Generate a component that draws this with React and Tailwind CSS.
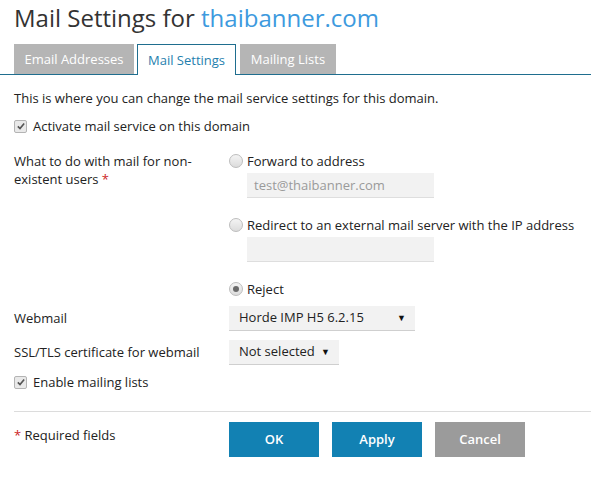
import React from "react";

function CheckBox() {
  return (
    <span className="inline-flex h-[13px] w-[13px] items-center justify-center rounded-[2px] border border-[#b4b4b4] bg-[#e9e9e9]">
      <svg viewBox="0 0 12 12" className="h-[10px] w-[10px]">
        <path d="M2.2 6.4 L4.8 9 L9.8 3" fill="none" stroke="#555" strokeWidth="2" />
      </svg>
    </span>
  );
}

function Radio({ checked }) {
  return (
    <span className="inline-flex h-[14px] w-[14px] items-center justify-center rounded-full border border-[#bdbdbd] bg-gradient-to-b from-[#f4f4f4] to-[#dcdcdc]">
      {checked && <span className="h-[6px] w-[6px] rounded-full bg-[#6a6a6a]" />}
    </span>
  );
}

function Select({ value, width }) {
  return (
    <div className={`flex h-[25px] items-center justify-between border-b border-[#cfcfcf] bg-[#f2f2f2] pl-[10px] pr-[9px] ${width}`}>
      <span>{value}</span>
      <span className="text-[9px] text-[#111]">▼</span>
    </div>
  );
}

export default function App() {
  return (
    <div className="min-h-[502px] w-[591px] overflow-hidden bg-white font-['Open_Sans',sans-serif] text-[13px] text-[#222]">
      <h1 className="pl-[14px] pt-[2px] text-[24px] leading-[32px] text-[#333]">
        Mail Settings for <span className="text-[#3d9ade]">thaibanner.com</span>
      </h1>

      <div className="mt-[10px] flex items-end border-b border-[#1f6e8f] pl-[14px]">
        <div className="mr-[3px] flex h-[30px] w-[120px] items-center justify-center bg-[#b5b5b5] pt-[2px] text-white">
          Email Addresses
        </div>
        <div className="relative -mb-px mr-[4px] flex h-[31px] w-[99px] items-center justify-center border border-b-0 border-[#1f6e8f] bg-white pt-[1px] text-[#1f7fae]">
          Mail Settings
        </div>
        <div className="flex h-[30px] w-[96px] items-center justify-center bg-[#b5b5b5] pt-[2px] text-white">
          Mailing Lists
        </div>
      </div>

      <div className="px-[14px]">
        <p className="mt-[14px] leading-[18px]">This is where you can change the mail service settings for this domain.</p>

        <div className="mt-[10px] flex items-center gap-[6px] leading-[18px]">
          <CheckBox />
          <span>Activate mail service on this domain</span>
        </div>

        <div className="mt-[17px] grid grid-cols-[215px_1fr] leading-[18px]">
          <div>
            What to do with mail for non-
            <br />
            existent users <span className="text-[#cc1f1f]">*</span>
          </div>
          <div className="flex flex-col">
            <div className="flex items-center gap-[4px]">
              <Radio />
              <span>Forward to address</span>
            </div>
            <div className="ml-[18px] mt-[3px] flex h-[25px] w-[187px] items-center border-b border-[#dedede] bg-[#f2f2f2] pl-[7px] text-[#9a9a9a]">
              test@thaibanner.com
            </div>
            <div className="mt-[18px] flex items-center gap-[4px]">
              <Radio />
              <span>Redirect to an external mail server with the IP address</span>
            </div>
            <div className="ml-[18px] mt-[3px] h-[25px] w-[187px] border-b border-[#dedede] bg-[#f2f2f2]" />
            <div className="mt-[18px] flex items-center gap-[4px]">
              <Radio checked />
              <span>Reject</span>
            </div>
          </div>
        </div>

        <div className="mt-[8px] grid grid-cols-[215px_1fr] items-center">
          <div>Webmail</div>
          <Select value="Horde IMP H5 6.2.15" width="w-[186px]" />
        </div>

        <div className="mt-[9px] grid grid-cols-[215px_1fr] items-center">
          <div>SSL/TLS certificate for webmail</div>
          <Select value="Not selected" width="w-[110px]" />
        </div>

        <div className="mt-[8px] flex items-center gap-[6px] leading-[18px]">
          <CheckBox />
          <span>Enable mailing lists</span>
        </div>
      </div>

      <div className="ml-[14px] mt-[20px] border-t border-[#dcdcdc]" />

      <div className="mt-[10px] grid grid-cols-[215px_1fr] px-[14px]">
        <div className="pt-[4px] leading-[18px]">
          <span className="text-[#cc1f1f]">*</span> Required fields
        </div>
        <div className="flex gap-[13px]">
          <button className="h-[35px] w-[90px] bg-[#1281b3] font-semibold text-white">OK</button>
          <button className="h-[35px] w-[90px] bg-[#1281b3] font-semibold text-white">Apply</button>
          <button className="h-[35px] w-[90px] bg-[#9b9b9b] font-semibold text-white">Cancel</button>
        </div>
      </div>
    </div>
  );
}
